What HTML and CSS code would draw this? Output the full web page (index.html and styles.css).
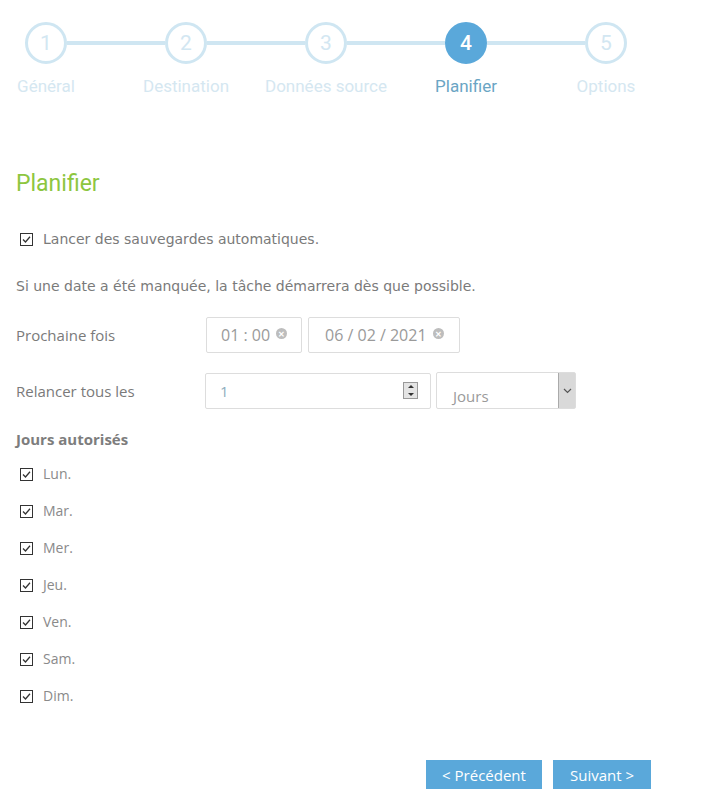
FILE: index.html
```html
<!DOCTYPE html>
<html lang="fr">
<head>
    <meta charset="UTF-8">
    <meta name="viewport" content="width=device-width, initial-scale=1.0">
    <title>Planifier</title>
    <link rel="stylesheet" href="styles.css">
</head>
<body>
    <div class="wizard">
        <div class="steps">
            <div class="circle">1</div>
            <div class="line"></div>
            <div class="circle">2</div>
            <div class="line"></div>
            <div class="circle">3</div>
            <div class="line"></div>
            <div class="circle active">4</div>
            <div class="line"></div>
            <div class="circle">5</div>
        </div>
        <div class="labels">
            <span>Général</span>
            <span>Destination</span>
            <span>Données source</span>
            <span class="active">Planifier</span>
            <span>Options</span>
        </div>
    </div>

    <div class="content">
        <h2>Planifier</h2>

        <label class="check main">
            <svg class="box" width="13" height="13" viewBox="0 0 13 13"><rect x="0.5" y="0.5" width="12" height="12" fill="#fff" stroke="#333"/><path d="M3 6.5 L5.5 9 L10 3.8" fill="none" stroke="#333" stroke-width="1.3"/></svg>
            Lancer des sauvegardes automatiques.
        </label>

        <p class="note">Si une date a été manquée, la tâche démarrera dès que possible.</p>

        <div class="row">
            <div class="label">Prochaine fois</div>
            <div class="field time">01 : 00 <span class="clear">&#x2715;</span></div>
            <div class="field date">06 / 02 / 2021 <span class="clear">&#x2715;</span></div>
        </div>

        <div class="row repeat">
            <div class="label">Relancer tous les</div>
            <div class="field number">
                <span>1</span>
                <span class="spin"><i class="up"></i><i class="down"></i></span>
            </div>
            <div class="field select">
                <span>Jours</span>
                <span class="arrow">
                    <svg width="9" height="6" viewBox="0 0 9 6"><path d="M1 1 L4.5 4.5 L8 1" fill="none" stroke="#555" stroke-width="1.2"/></svg>
                </span>
            </div>
        </div>

        <div class="days-title">Jours autorisés</div>
        <div class="days">
            <label class="check day"><svg class="box" width="13" height="13" viewBox="0 0 13 13"><rect x="0.5" y="0.5" width="12" height="12" fill="#fff" stroke="#333"/><path d="M3 6.5 L5.5 9 L10 3.8" fill="none" stroke="#333" stroke-width="1.3"/></svg>Lun.</label>
            <label class="check day"><svg class="box" width="13" height="13" viewBox="0 0 13 13"><rect x="0.5" y="0.5" width="12" height="12" fill="#fff" stroke="#333"/><path d="M3 6.5 L5.5 9 L10 3.8" fill="none" stroke="#333" stroke-width="1.3"/></svg>Mar.</label>
            <label class="check day"><svg class="box" width="13" height="13" viewBox="0 0 13 13"><rect x="0.5" y="0.5" width="12" height="12" fill="#fff" stroke="#333"/><path d="M3 6.5 L5.5 9 L10 3.8" fill="none" stroke="#333" stroke-width="1.3"/></svg>Mer.</label>
            <label class="check day"><svg class="box" width="13" height="13" viewBox="0 0 13 13"><rect x="0.5" y="0.5" width="12" height="12" fill="#fff" stroke="#333"/><path d="M3 6.5 L5.5 9 L10 3.8" fill="none" stroke="#333" stroke-width="1.3"/></svg>Jeu.</label>
            <label class="check day"><svg class="box" width="13" height="13" viewBox="0 0 13 13"><rect x="0.5" y="0.5" width="12" height="12" fill="#fff" stroke="#333"/><path d="M3 6.5 L5.5 9 L10 3.8" fill="none" stroke="#333" stroke-width="1.3"/></svg>Ven.</label>
            <label class="check day"><svg class="box" width="13" height="13" viewBox="0 0 13 13"><rect x="0.5" y="0.5" width="12" height="12" fill="#fff" stroke="#333"/><path d="M3 6.5 L5.5 9 L10 3.8" fill="none" stroke="#333" stroke-width="1.3"/></svg>Sam.</label>
            <label class="check day"><svg class="box" width="13" height="13" viewBox="0 0 13 13"><rect x="0.5" y="0.5" width="12" height="12" fill="#fff" stroke="#333"/><path d="M3 6.5 L5.5 9 L10 3.8" fill="none" stroke="#333" stroke-width="1.3"/></svg>Dim.</label>
        </div>

        <div class="buttons">
            <button class="btn prev">&lt; Précédent</button>
            <button class="btn next">Suivant &gt;</button>
        </div>
    </div>
</body>
</html>
```

FILE: styles.css
```css
body {
    margin: 0;
    background: #fff;
    font-family: "Open Sans", sans-serif;
    color: #7a7a7a;
    overflow: hidden;
}
.wizard {
    padding-top: 22px;
}
.steps {
    display: flex;
    align-items: center;
    padding-left: 25px;
}
.circle {
    width: 36px;
    height: 36px;
    border: 3px solid #cfe6f2;
    border-radius: 50%;
    display: flex;
    align-items: center;
    justify-content: center;
    font-family: Roboto, sans-serif;
    font-size: 21px;
    color: #d3e7f2;
    flex: none;
}
.circle.active {
    background: #5aa8da;
    border-color: #5aa8da;
    color: #fff;
    font-weight: 500;
}
.line {
    width: 98px;
    height: 4px;
    background: #cfe6f2;
    flex: none;
}
.labels {
    display: flex;
    margin-left: -24px;
    margin-top: 12px;
}
.labels span {
    width: 140px;
    flex: none;
    text-align: center;
    font-family: Roboto, sans-serif;
    font-size: 17px;
    line-height: 20px;
    color: #d5e7f1;
}
.labels span.active {
    color: #6aa5c4;
}
.content {
    padding: 0 16px;
}
h2 {
    margin: 74px 0 0;
    font-family: Roboto, sans-serif;
    font-weight: 400;
    font-size: 23px;
    line-height: 28px;
    color: #8dc63f;
}
.check {
    display: flex;
    align-items: center;
    padding-left: 4px;
}
.check .box {
    flex: none;
    margin-right: 10px;
}
.check.main {
    margin-top: 33px;
    font-family: "DejaVu Sans", sans-serif;
    font-size: 14px;
    line-height: 16px;
}
.note {
    margin: 31px 0 0;
    font-family: "DejaVu Sans", sans-serif;
    font-size: 14px;
    line-height: 16px;
}
.row {
    display: flex;
    align-items: center;
    margin-top: 23px;
}
.row.repeat {
    margin-top: 19px;
}
.label {
    width: 190px;
    flex: none;
    font-size: 15px;
}
.field {
    height: 34px;
    border: 1px solid #ddd;
    border-radius: 2px;
    display: flex;
    align-items: center;
    box-sizing: content-box;
    color: #9a9a9a;
    font-size: 16px;
}
.time {
    width: 80px;
    padding-left: 14px;
    margin-right: 6px;
}
.date {
    width: 134px;
    padding-left: 16px;
}
.clear {
    width: 11px;
    height: 11px;
    border-radius: 50%;
    background: #bdbdbd;
    color: #fff;
    font-size: 8px;
    line-height: 11px;
    text-align: center;
    font-weight: bold;
    margin-left: 6px;
    margin-top: -4px;
}
.number {
    width: 210px;
    padding-left: 14px;
    justify-content: space-between;
    color: #8fadbd;
    margin-left: -1px;
    font-size: 15px;
}
.spin {
    width: 13px;
    height: 15px;
    border: 1px solid #999;
    background: #e4e4e4;
    margin-right: 12px;
    display: flex;
    flex-direction: column;
    align-items: center;
    justify-content: space-around;
}
.spin i {
    width: 0;
    height: 0;
    border-left: 3px solid transparent;
    border-right: 3px solid transparent;
}
.spin .up {
    border-bottom: 3px solid #333;
}
.spin .down {
    border-top: 3px solid #333;
}
.select {
    width: 122px;
    padding-left: 16px;
    margin-left: 5px;
    height: 35px;
    justify-content: space-between;
    align-items: stretch;
    font-size: 15px;
}
.select > span:first-child {
    padding-top: 13px;
}
.arrow {
    width: 16px;
    background: #d9d9d9;
    border-left: 1px solid #aaa;
    display: flex;
    align-items: center;
    justify-content: center;
}
.days-title {
    margin-top: 21px;
    font-family: "Open Sans", sans-serif;
    font-weight: 700;
    font-size: 15px;
    line-height: 18px;
    color: #7d7d7d;
}
.days {
    display: flex;
    flex-direction: column;
    gap: 19px;
    margin-top: 17px;
}
.day {
    font-size: 14px;
    line-height: 18px;
    color: #8a8a8a;
}
.buttons {
    display: flex;
    justify-content: flex-end;
    gap: 11px;
    margin-top: 55px;
    padding-right: 47px;
}
.btn {
    background: #5aa8da;
    border: none;
    color: #fff;
    font-family: "Open Sans", sans-serif;
    font-size: 15px;
    height: 29px;
    padding: 0 15px;
    cursor: pointer;
}
.btn.prev {
    width: 116px;
}
.btn.next {
    width: 98px;
}
```
